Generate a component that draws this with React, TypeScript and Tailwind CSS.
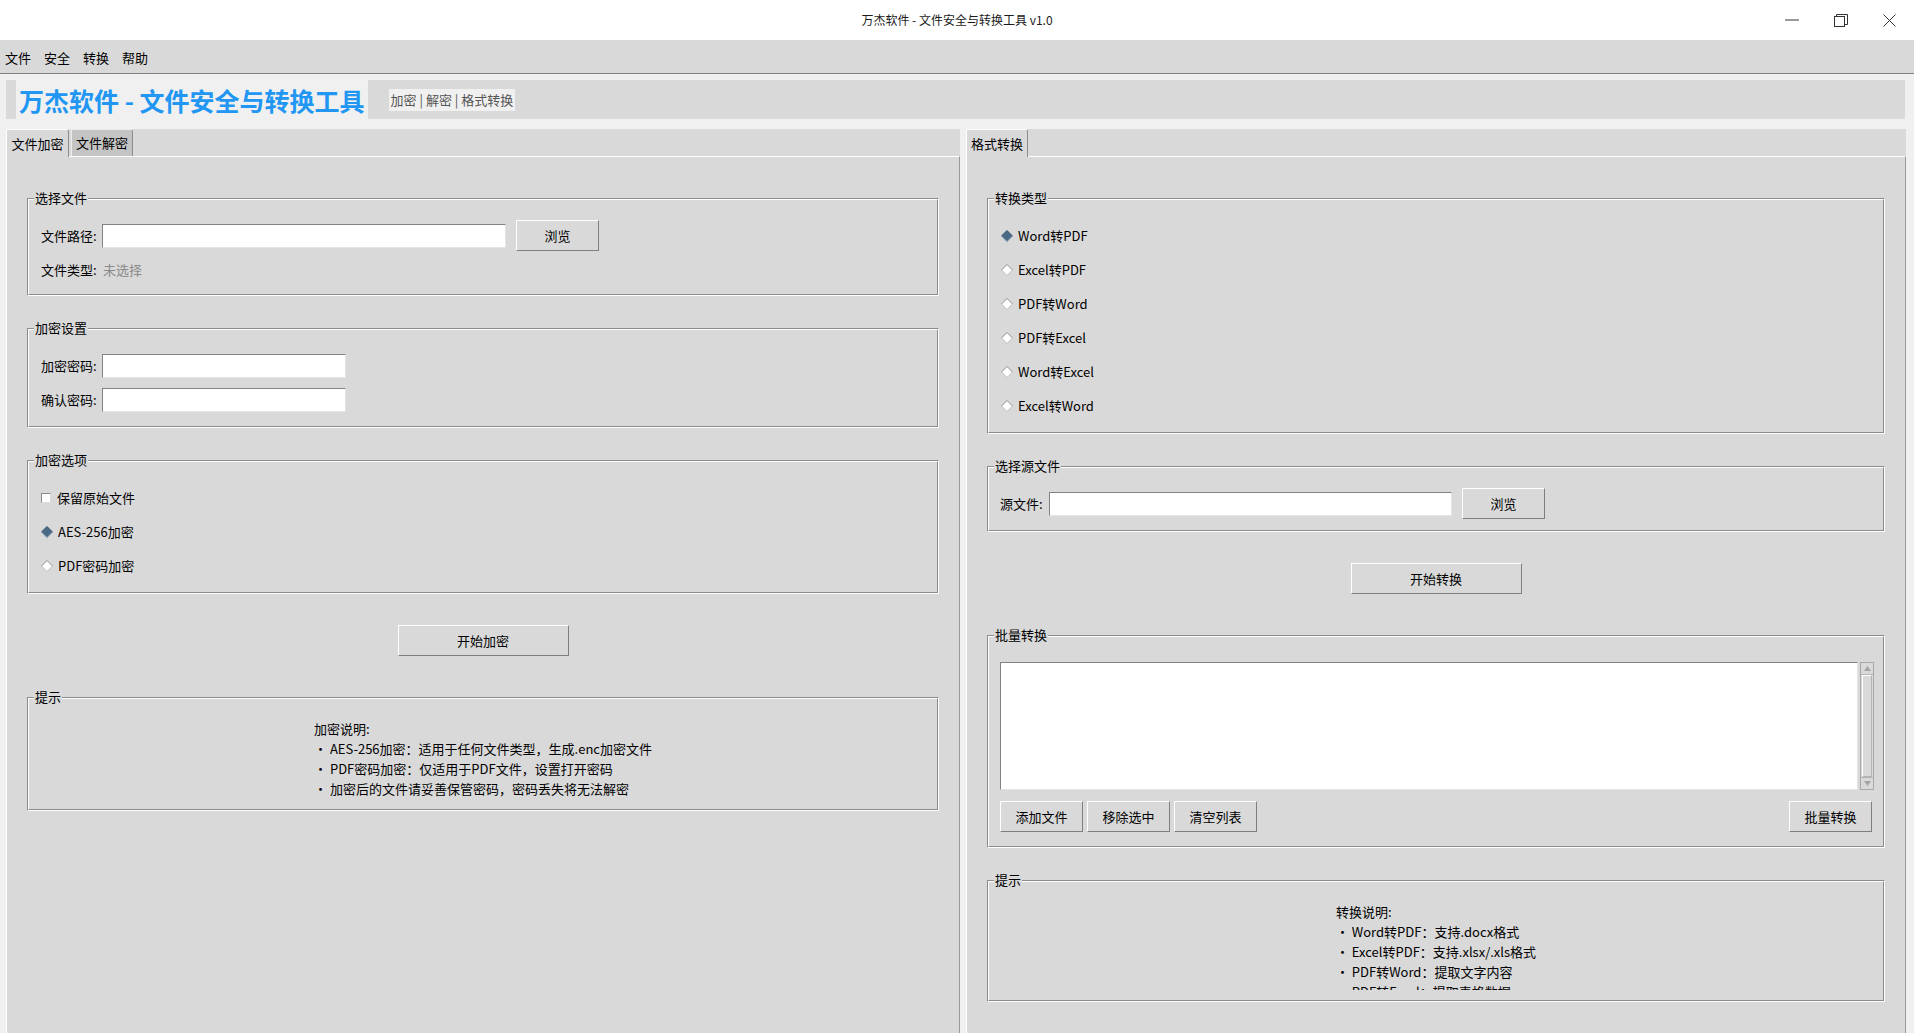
import React from "react";

function Group({ label, className, children }: { label: string; className?: string; children: React.ReactNode }) {
  return (
    <div className={"relative border border-t-[#8c8c8c] border-l-[#8c8c8c] border-b-white border-r-white " + (className ?? "")}>
      <div className="border border-t-white border-l-white border-b-[#8c8c8c] border-r-[#8c8c8c]">{children}</div>
      <span className="absolute left-[6px] top-[-11px] bg-[#d9d9d9] px-px text-[13px] leading-[20px] text-black">{label}</span>
    </div>
  );
}

function Btn({ children, className }: { children: React.ReactNode; className?: string }) {
  return (
    <button
      type="button"
      className={"flex h-[31px] items-center justify-center border border-t-white border-l-white border-b-[#7f7f7f] border-r-[#7f7f7f] bg-[#d9d9d9] text-[13px] leading-[20px] text-black " + (className ?? "")}
    >
      {children}
    </button>
  );
}

function Entry({ className }: { className?: string }) {
  return (
    <div className={"h-[24px] border border-t-[#828282] border-l-[#828282] border-b-[#e4e4e4] border-r-[#e4e4e4] bg-white " + (className ?? "")} />
  );
}

function Radio({ checked, label }: { checked?: boolean; label: string }) {
  return (
    <div className="flex h-[34px] items-center gap-[5px]">
      <svg width="12" height="12" viewBox="0 0 12 12">
        {checked ? (
          <>
            <polygon points="6,0.5 11.5,6 6,11.5 0.5,6" fill="#4a6984" />
            <path d="M0.5 6 L6 0.5 L11.5 6" fill="none" stroke="#3a546e" strokeWidth="1" />
            <path d="M0.5 6 L6 11.5 L11.5 6" fill="none" stroke="#7d93aa" strokeWidth="1" />
          </>
        ) : (
          <>
            <polygon points="6,0.5 11.5,6 6,11.5 0.5,6" fill="#ffffff" />
            <path d="M0.5 6 L6 0.5 L11.5 6" fill="none" stroke="#8e8e8e" strokeWidth="1" />
            <path d="M0.5 6 L6 11.5 L11.5 6" fill="none" stroke="#bdbdbd" strokeWidth="1" />
          </>
        )}
      </svg>
      <span>{label}</span>
    </div>
  );
}

function Tab({ label, selected, className }: { label: string; selected?: boolean; className?: string }) {
  return selected ? (
    <div
      className={"relative z-10 -mb-px flex h-[28px] items-center justify-center rounded-tr-[3px] border-l border-t border-r border-l-white border-t-white border-r-[#8c8c8c] bg-[#d9d9d9] text-[13px] leading-[20px] " + (className ?? "")}
    >
      {label}
    </div>
  ) : (
    <div
      className={"flex h-[27px] items-center justify-center rounded-tr-[3px] border-l border-t border-r border-l-[#ececec] border-t-[#ececec] border-r-[#8c8c8c] bg-[#c4c4c4] text-[13px] leading-[20px] " + (className ?? "")}
    >
      {label}
    </div>
  );
}

export default function App() {
  const encHint = [
    "加密说明:",
    "• AES-256加密：适用于任何文件类型，生成.enc加密文件",
    "• PDF密码加密：仅适用于PDF文件，设置打开密码",
    "• 加密后的文件请妥善保管密码，密码丢失将无法解密",
  ];
  const convHint = [
    "转换说明:",
    "• Word转PDF：支持.docx格式",
    "• Excel转PDF：支持.xlsx/.xls格式",
    "• PDF转Word：提取文字内容",
    "• PDF转Excel：提取表格数据",
    "• Word转Excel：提取表格数据",
    "• Excel转Word：生成表格文档",
  ];

  return (
    <div className="flex h-screen w-full flex-col overflow-hidden bg-[#f0f0f0] font-['Noto_Sans_CJK_SC','Noto_Sans',sans-serif] text-[13px] text-black">
      {/* Title bar */}
      <div className="grid h-[40px] shrink-0 grid-cols-[1fr_auto_1fr] items-center bg-white">
        <div />
        <div className="text-[12px] leading-[16px] text-[#1a1a1a]">万杰软件 - 文件安全与转换工具 v1.0</div>
        <div className="flex h-full justify-end">
          <div className="flex w-[49px] items-center justify-center">
            <svg width="14" height="2" viewBox="0 0 14 2">
              <line x1="0" y1="1" x2="14" y2="1" stroke="#333" strokeWidth="1" />
            </svg>
          </div>
          <div className="flex w-[49px] items-center justify-center">
            <svg width="14" height="13" viewBox="0 0 14 13">
              <rect x="0.5" y="2.5" width="10" height="10" fill="none" stroke="#333" strokeWidth="1" />
              <path d="M2.5 2.5 V0.5 H13.5 V10.5 H10.5" fill="none" stroke="#333" strokeWidth="1" />
            </svg>
          </div>
          <div className="flex w-[49px] items-center justify-center">
            <svg width="13" height="13" viewBox="0 0 13 13">
              <path d="M0.5 0.5 L12.5 12.5 M12.5 0.5 L0.5 12.5" stroke="#333" strokeWidth="1" />
            </svg>
          </div>
        </div>
      </div>

      {/* Menu bar */}
      <div className="flex h-[34px] shrink-0 items-center gap-[13px] border-b border-[#808080] bg-[#d9d9d9] pl-[5px] pt-[3px] text-[13px] leading-[20px]">
        <span>文件</span>
        <span>安全</span>
        <span>转换</span>
        <span>帮助</span>
      </div>

      {/* Header */}
      <div className="ml-[6px] mr-[9px] mt-[6px] flex h-[39px] shrink-0 items-center bg-[#d9d9d9]">
        <div className="ml-[10px] flex h-full items-center bg-[#f0f0f0] px-[3px] pt-[1px] text-[25px] font-bold leading-[32px] text-[#2196f3]">
          万杰软件 - 文件安全与转换工具
        </div>
        <div className="ml-[21px] flex h-[22px] items-center bg-[#f0f0f0] px-[2px] text-[13px] leading-[22px] text-[#555555]">
          加密 | 解密 | 格式转换
        </div>
      </div>

      {/* Notebooks */}
      <div className="mt-[10px] flex min-h-0 flex-1 gap-[6px] pl-[6px] pr-[8px]">
        {/* Left notebook */}
        <div className="flex w-[954px] flex-col bg-[#d9d9d9]">
          <div className="flex h-[27px] shrink-0 items-start gap-[2px]">
            <Tab label="文件加密" selected className="w-[63px]" />
            <Tab label="文件解密" className="w-[62px]" />
          </div>
          <div className="flex-1 border-l border-t border-r border-l-white border-t-white border-r-[#9a9a9a] px-[20px] pt-[41px]">
            <Group label="选择文件">
              <div className="pb-[14px] pl-[12px] pt-[20px]">
                <div className="flex h-[31px] items-center">
                  <span className="w-[61px]">文件路径:</span>
                  <Entry className="w-[404px]" />
                  <Btn className="ml-[10px] w-[83px]">浏览</Btn>
                </div>
                <div className="mt-[9px] flex h-[20px] items-center leading-[20px]">
                  <span className="w-[62px]">文件类型:</span>
                  <span className="text-[#8a8a8a]">未选择</span>
                </div>
              </div>
            </Group>

            <Group label="加密设置" className="mt-[32px]">
              <div className="pb-[14px] pl-[12px] pt-[24px]">
                <div className="flex h-[24px] items-center">
                  <span className="w-[61px]">加密密码:</span>
                  <Entry className="w-[244px]" />
                </div>
                <div className="mt-[10px] flex h-[24px] items-center">
                  <span className="w-[61px]">确认密码:</span>
                  <Entry className="w-[244px]" />
                </div>
              </div>
            </Group>

            <Group label="加密选项" className="mt-[32px]">
              <div className="pb-[9px] pl-[12px] pt-[19px] leading-[20px]">
                <div className="flex h-[34px] items-center gap-[6px]">
                  <div className="h-[10px] w-[10px] border border-t-[#8a8a8a] border-l-[#8a8a8a] border-b-[#dcdcdc] border-r-[#dcdcdc] bg-white" />
                  <span>保留原始文件</span>
                </div>
                <Radio checked label="AES-256加密" />
                <Radio label="PDF密码加密" />
              </div>
            </Group>

            <div className="mt-[31px] flex justify-center">
              <Btn className="w-[171px]">开始加密</Btn>
            </div>

            <Group label="提示" className="mt-[41px]">
              <div className="flex justify-center pb-[10px] pt-[20px]">
                <div className="whitespace-pre text-left leading-[20px]">
                  {encHint.map((l) => (
                    <div key={l}>{l}</div>
                  ))}
                </div>
              </div>
            </Group>
          </div>
        </div>

        {/* Right notebook */}
        <div className="flex flex-1 flex-col bg-[#d9d9d9]">
          <div className="flex h-[27px] shrink-0 items-start">
            <Tab label="格式转换" selected className="w-[62px]" />
          </div>
          <div className="flex-1 border-l border-t border-r border-l-white border-t-white border-r-[#9a9a9a] px-[20px] pt-[41px]">
            <Group label="转换类型">
              <div className="pb-[9px] pl-[12px] pt-[19px] leading-[20px]">
                <Radio checked label="Word转PDF" />
                <Radio label="Excel转PDF" />
                <Radio label="PDF转Word" />
                <Radio label="PDF转Excel" />
                <Radio label="Word转Excel" />
                <Radio label="Excel转Word" />
              </div>
            </Group>

            <Group label="选择源文件" className="mt-[32px]">
              <div className="pb-[11px] pl-[11px] pt-[20px]">
                <div className="flex h-[31px] items-center">
                  <span className="w-[49px]">源文件:</span>
                  <Entry className="w-[403px]" />
                  <Btn className="ml-[10px] w-[83px]">浏览</Btn>
                </div>
              </div>
            </Group>

            <div className="mt-[31px] flex justify-center">
              <Btn className="w-[171px]">开始转换</Btn>
            </div>

            <Group label="批量转换" className="mt-[41px]">
              <div className="pb-[14px] pl-[11px] pr-[9px] pt-[25px]">
                <div className="flex h-[128px]">
                  <div className="flex-1 border border-t-[#828282] border-l-[#828282] border-b-[#e4e4e4] border-r-[#e4e4e4] bg-white" />
                  <div className="ml-[2px] flex w-[14px] flex-col border border-[#a8a8a8] bg-[#d9d9d9]">
                    <div className="flex h-[12px] items-center justify-center border-b border-[#b4b4b4]">
                      <svg width="7" height="5" viewBox="0 0 7 5">
                        <polygon points="3.5,0 7,5 0,5" fill="#a4a4a4" />
                      </svg>
                    </div>
                    <div className="mx-[1px] flex-1 border border-t-white border-l-white border-b-[#b4b4b4] border-r-[#b4b4b4]" />
                    <div className="flex h-[12px] items-center justify-center border-t border-[#b4b4b4]">
                      <svg width="7" height="5" viewBox="0 0 7 5">
                        <polygon points="0,0 7,0 3.5,5" fill="#a4a4a4" />
                      </svg>
                    </div>
                  </div>
                </div>
                <div className="mt-[11px] flex items-center gap-[4px]">
                  <Btn className="w-[83px]">添加文件</Btn>
                  <Btn className="w-[83px]">移除选中</Btn>
                  <Btn className="w-[83px]">清空列表</Btn>
                  <Btn className="ml-auto mr-[2px] w-[83px]">批量转换</Btn>
                </div>
              </div>
            </Group>

            <Group label="提示" className="mt-[32px]">
              <div className="pb-[10px] pt-[20px]">
                <div className="flex h-[88px] justify-center overflow-hidden">
                  <div className="whitespace-pre text-left leading-[20px]">
                    {convHint.map((l) => (
                      <div key={l}>{l}</div>
                    ))}
                  </div>
                </div>
              </div>
            </Group>
          </div>
        </div>
      </div>
    </div>
  );
}
